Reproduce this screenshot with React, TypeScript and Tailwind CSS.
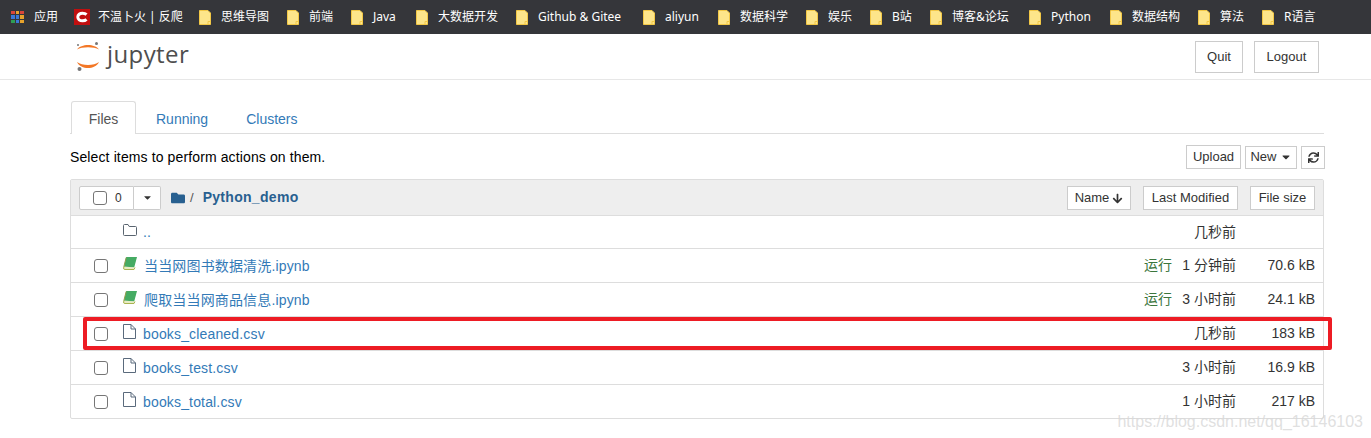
import React from "react";
import { FaArrowDown, FaCaretDown, FaFolder, FaSync } from "react-icons/fa";

const fontStack = "font-['Liberation_Sans','Noto_Sans_CJK_SC',sans-serif]";

const bookmarks = [
  { label: "思维导图", width: "w-[48px]" },
  { label: "前端", width: "w-[24px]" },
  { label: "Java", width: "w-[25px]" },
  { label: "大数据开发", width: "w-[60px]" },
  { label: "Github & Gitee", width: "w-[87px]" },
  { label: "aliyun", width: "w-[35px]" },
  { label: "数据科学", width: "w-[48px]" },
  { label: "娱乐", width: "w-[24px]" },
  { label: "B站", width: "w-[20px]" },
  { label: "博客&论坛", width: "w-[59px]" },
  { label: "Python", width: "w-[41px]" },
  { label: "数据结构", width: "w-[48px]" },
  { label: "算法", width: "w-[24px]" },
  { label: "R语言", width: "w-[32px]" },
];

type Row = {
  name: string;
  kind: "up" | "book" | "file";
  time: string;
  size?: string;
  running?: boolean;
  height: string;
};

const rows: Row[] = [
  { name: "..", kind: "up", time: "几秒前", height: "h-[33px]" },
  { name: "当当网图书数据清洗.ipynb", kind: "book", time: "1 分钟前", size: "70.6 kB", running: true, height: "h-[34px]" },
  { name: "爬取当当网商品信息.ipynb", kind: "book", time: "3 小时前", size: "24.1 kB", running: true, height: "h-[34px]" },
  { name: "books_cleaned.csv", kind: "file", time: "几秒前", size: "183 kB", height: "h-[34px]" },
  { name: "books_test.csv", kind: "file", time: "3 小时前", size: "16.9 kB", height: "h-[34px]" },
  { name: "books_total.csv", kind: "file", time: "1 小时前", size: "217 kB", height: "h-[34px]" },
];

function FolderMark() {
  return (
    <svg width="12" height="15" viewBox="0 0 12 15" className="shrink-0">
      <path d="M0.5 0.5H9L11.5 3V14.5H0.5Z" fill="#fde58a" stroke="#f3c846" />
      <path d="M9 14.5V11.5H11.5" fill="none" stroke="#f3c846" />
    </svg>
  );
}

function AppsGrid() {
  const colors = ["#d9463a", "#e8a32c", "#d9463a", "#3a78d8", "#3a78d8", "#e8a32c", "#2f9e54", "#3a78d8", "#e8a32c"];
  return (
    <div className="grid grid-cols-3 gap-[1px] w-[13px] h-[13px]">
      {colors.map((c, i) => (
        <div key={i} className="w-[3.6px] h-[3.6px]" style={{ backgroundColor: c }} />
      ))}
    </div>
  );
}

function RedCLogo() {
  return (
    <svg width="16" height="16" viewBox="0 0 16 16" className="ml-[16px] shrink-0">
      <rect width="16" height="16" fill="#c10f0f" />
      <path d="M12.5 5.6C11.5 4.6 10 4.2 8.5 4.2C5.8 4.2 3.8 5.8 3.8 8C3.8 10.2 5.8 11.8 8.5 11.8C10 11.8 11.5 11.4 12.5 10.4" fill="none" stroke="white" strokeWidth="3" />
    </svg>
  );
}

function JupyterLogo() {
  return (
    <svg width="26" height="32" viewBox="0 0 26 32">
      <path d="M2 8.5C6 2.5 20 2.5 24 8.5C19 5.5 7 5.5 2 8.5Z" fill="#f37726" />
      <path d="M2 21C6 29 20 29 24 21C19 25 7 25 2 21Z" fill="#f37726" />
      <circle cx="21.5" cy="2.5" r="1.5" fill="#767677" />
      <circle cx="3" cy="4" r="1" fill="#767677" />
      <circle cx="4.5" cy="28" r="2" fill="#767677" />
    </svg>
  );
}

function RowIcon({ kind }: { kind: Row["kind"] }) {
  if (kind === "up") {
    return (
      <svg width="14" height="12" viewBox="0 0 14 12" className="text-[#5a6570]">
        <path d="M1.5 0.5H5L6.2 2.5H12.5Q13.5 2.5 13.5 3.5V10.5Q13.5 11.5 12.5 11.5H1.5Q0.5 11.5 0.5 10.5V1.5Q0.5 0.5 1.5 0.5Z" fill="none" stroke="currentColor" />
      </svg>
    );
  }
  if (kind === "book") {
    return (
      <svg width="14" height="13" viewBox="0 0 14 13">
        <path d="M3.2 0H14L11.2 10.5H0.8Z" fill="#45ab63" />
        <path d="M1.2 9.5L0.5 11Q0.5 12.5 2 12.5H11L12 10.5" fill="#e8ebc4" stroke="#a9b450" />
        <path d="M3.2 0.5L0.8 9.8" stroke="#8f9a4a" fill="none" />
      </svg>
    );
  }
  return (
    <svg width="13" height="15" viewBox="0 0 13 15" className="text-[#5a6a7c]">
      <path d="M0.5 0.5H8L12.5 5V14.5H0.5Z" fill="white" stroke="currentColor" />
      <path d="M8 0.5V5H12.5" fill="none" stroke="currentColor" />
    </svg>
  );
}

function Checkbox() {
  return <span className="block w-[14px] h-[14px] rounded-[3px] border border-[#767676] bg-white" />;
}

function FileRow({ row }: { row: Row }) {
  return (
    <div className={`flex items-center border-t border-[#ddd] pr-[8px] text-[14px] ${row.height}`}>
      <div className="w-[52px] pl-[23px] shrink-0">{row.kind !== "up" && <Checkbox />}</div>
      <div className="w-[20px] shrink-0 -mt-[4px]">
        <RowIcon kind={row.kind} />
      </div>
      <span className={`flex-1 text-[#337ab7] tracking-[0.16px] pt-[1px] ${row.kind === "book" ? "ml-[1px]" : ""}`}>{row.name}</span>
      {row.running && <span className="text-[#3c763d] mr-[8px]">运行</span>}
      <span className="w-[56px] text-right text-[#333] whitespace-nowrap">{row.time}</span>
      <span className="w-[79px] text-right text-[#333] whitespace-nowrap">{row.size}</span>
    </div>
  );
}

export default function App() {
  return (
    <div className={`relative w-[1371px] h-[438px] overflow-hidden bg-white ${fontStack}`}>
      {/* Bookmarks */}
      <div className="flex items-center h-[34px] bg-[#35363a] pl-[11px] text-[12px] text-white whitespace-nowrap font-['Noto_Sans','Noto_Sans_CJK_SC',sans-serif]">
        <AppsGrid />
        <span className="ml-[10px] w-[24px]">应用</span>
        <RedCLogo />
        <span className="ml-[8px] w-[83px]">不温卜火 | 反爬</span>
        <div className="flex items-center gap-[18px] ml-[18px]">
          {bookmarks.map((b) => (
            <div key={b.label} className="flex items-center gap-[10px]">
              <FolderMark />
              <span className={b.width}>{b.label}</span>
            </div>
          ))}
        </div>
      </div>

      {/* Header */}
      <div className="flex items-center h-[46px] border-b border-[#e7e7e7] pl-[75px] pr-[52px]">
        <JupyterLogo />
        <span className="ml-[6px] -mt-[6px] font-['Open_Sans',sans-serif] text-[24px] tracking-[0.4px] text-[#4e4e4e]">jupyter</span>
        <div className="ml-auto flex gap-[11px] text-[13px] text-[#333]">
          <button className="w-[48px] h-[32px] border border-[#ccc]">Quit</button>
          <button className="w-[65px] h-[32px] border border-[#ccc]">Logout</button>
        </div>
      </div>

      <div className="pl-[70px] pr-[47px]">
        {/* Tabs */}
        <div className="flex mt-[21px] h-[33px] border-b border-[#ddd] text-[14px]">
          <div className="flex items-center justify-center ml-[1px] w-[65px] h-[33px] pt-[2px] bg-white border border-b-0 border-[#ddd] rounded-t-[3px] text-[#555]">Files</div>
          <div className="flex items-center ml-[20px] h-[33px] pt-[3px] text-[#337ab7]">Running</div>
          <div className="flex items-center ml-[38px] h-[33px] pt-[3px] text-[#337ab7]">Clusters</div>
        </div>

        {/* Toolbar */}
        <div className="flex items-center h-[45px] text-[#333]">
          <span className="text-[14px] pt-[2px] tracking-[0.12px] text-black">Select items to perform actions on them.</span>
          <div className="ml-auto mr-[-1px] flex items-center text-[13px]">
            <button className="w-[55px] h-[24px] border border-[#ccc]">Upload</button>
            <button className="flex items-center justify-center gap-[3px] ml-[4px] w-[52px] h-[23px] mt-[1px] border border-[#ccc]">
              New <FaCaretDown size={12} />
            </button>
            <button className="flex items-center justify-center ml-[4px] w-[24px] h-[23px] mt-[1px] border border-[#ccc]">
              <FaSync size={11} />
            </button>
          </div>
        </div>

        {/* File list */}
        <div className="border border-[#ddd] rounded-[2px]">
          <div className="flex items-center h-[35px] bg-[#eeeeee] pl-[8px] pr-[8px] text-[13px] text-[#333]">
            <div className="flex h-[24px]">
              <div className="flex items-center w-[55px] pl-[13px] gap-[8px] bg-white border border-[#ccc] rounded-l-[2px]">
                <Checkbox />
                <span className="text-[12px]">0</span>
              </div>
              <div className="flex items-center justify-center w-[27px] bg-white border border-l-0 border-[#ccc] rounded-r-[2px]">
                <FaCaretDown size={11} />
              </div>
            </div>
            <FaFolder size={14} className="ml-[10px] text-[#286090]" />
            <span className="ml-[5px] text-[#555]">/</span>
            <span className="ml-[9px] text-[14px] font-bold tracking-[0.3px] text-[#286090]">Python_demo</span>
            <div className="ml-auto flex gap-[12px]">
              <button className="flex items-center justify-center gap-[3px] w-[64px] h-[24px] pt-[1px] bg-white border border-[#ccc]">
                Name <FaArrowDown size={11} />
              </button>
              <button className="w-[95px] h-[24px] pt-[1px] bg-white border border-[#ccc]">Last Modified</button>
              <button className="w-[65px] h-[24px] pt-[1px] bg-white border border-[#ccc]">File size</button>
            </div>
          </div>
          {rows.map((row) => (
            <FileRow key={row.name} row={row} />
          ))}
        </div>
      </div>

      {/* Annotation and watermark sit over the list */}
      <div className="absolute left-[83px] top-[317px] w-[1249px] h-[33px] border-4 border-[#ed1c24] rounded-[2px]" />
      <span className="absolute right-[8px] top-[410px] text-[16px] text-[#d8d8d8]/80">https://blog.csdn.net/qq_16146103</span>
    </div>
  );
}
